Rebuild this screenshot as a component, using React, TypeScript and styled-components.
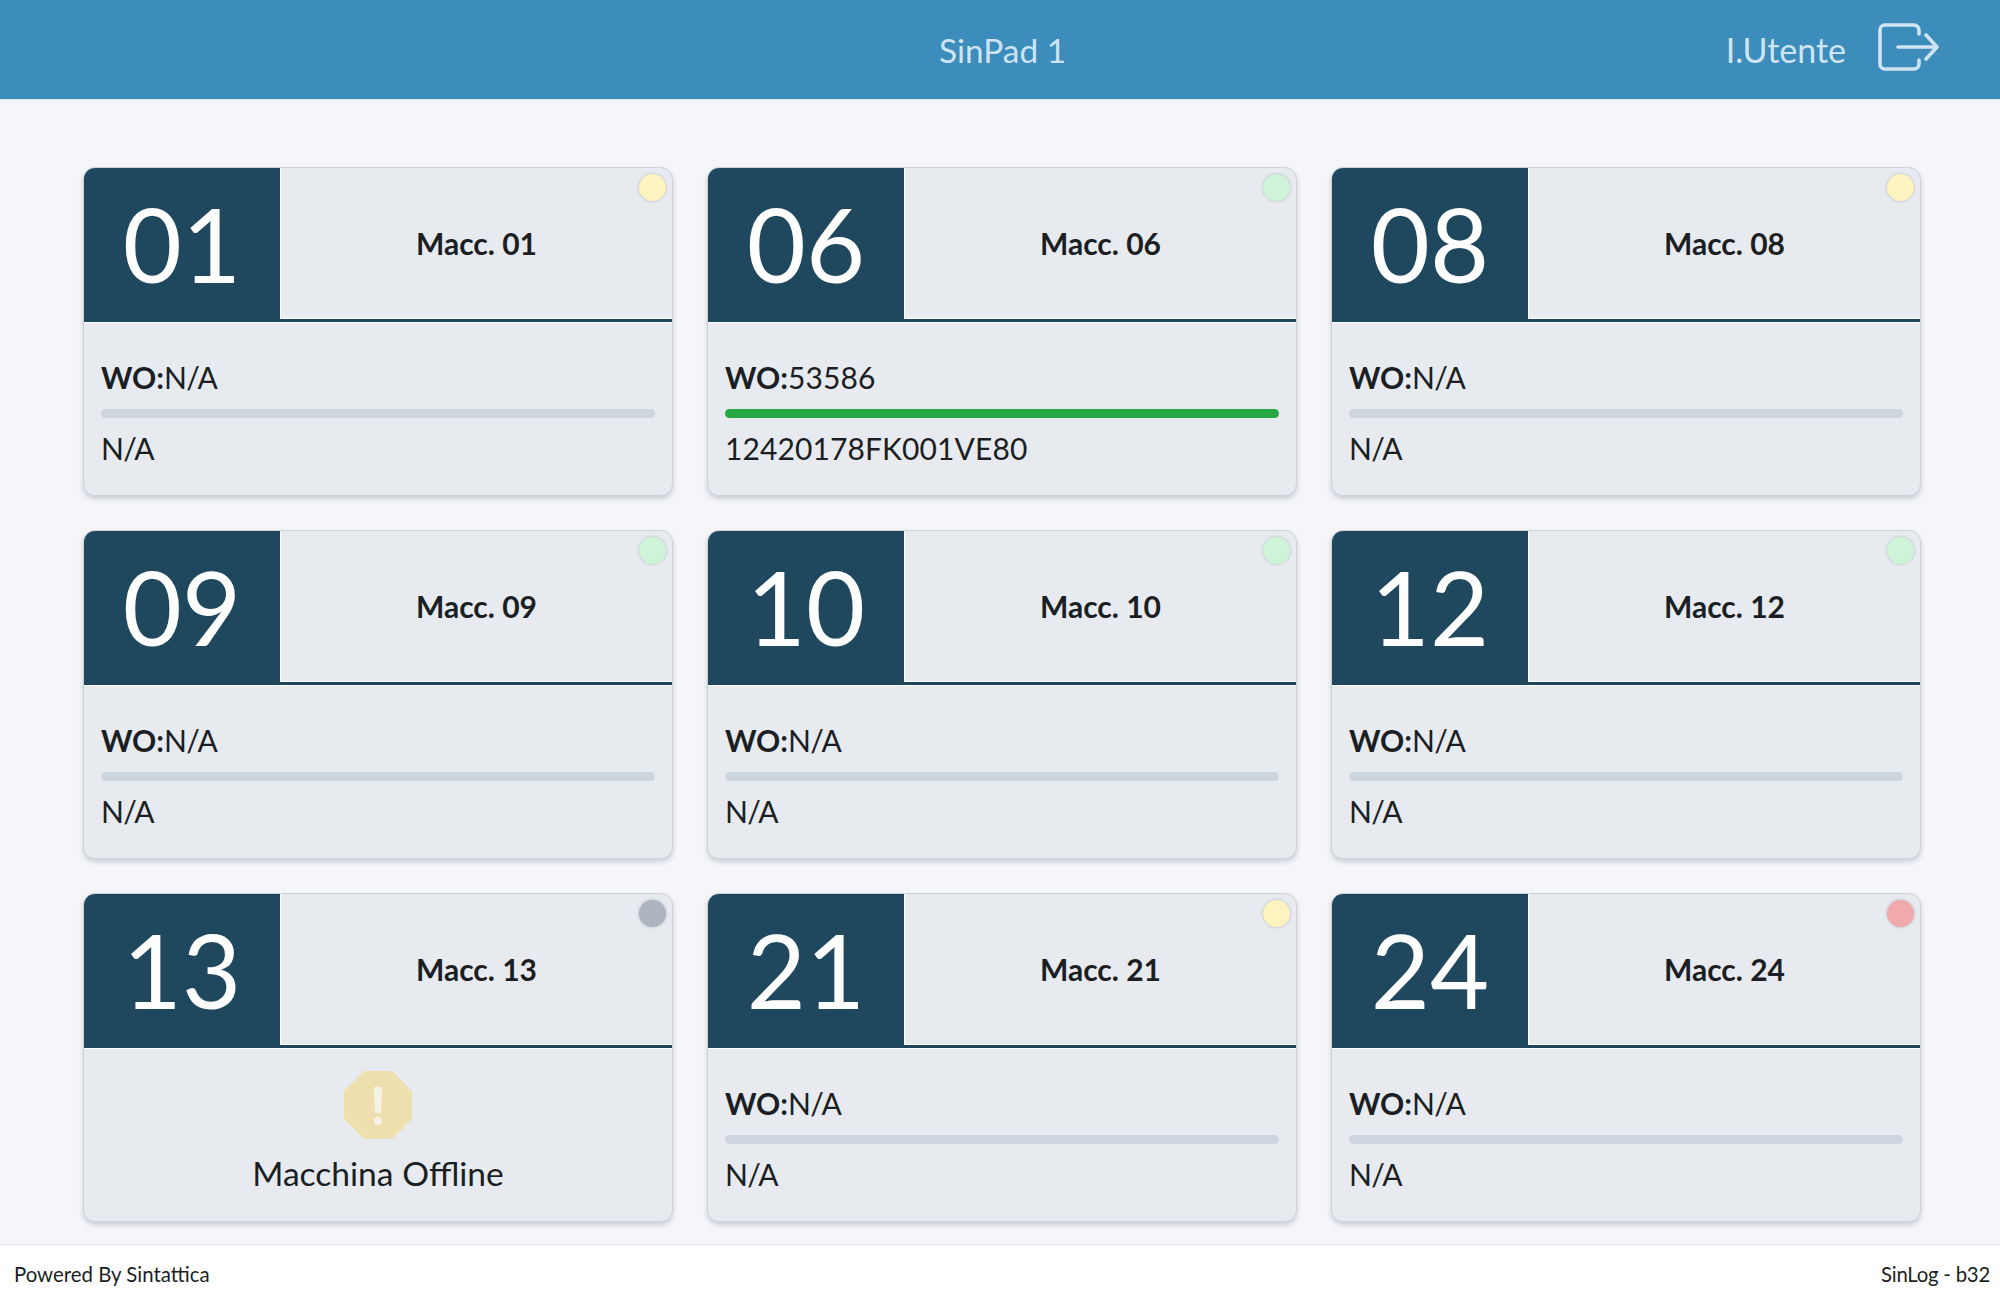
import React from "react";
import styled, { createGlobalStyle } from "styled-components";

const GlobalStyle = createGlobalStyle`
  html, body {
    margin: 0;
    padding: 0;
    background: #f4f6fa;
    font-family: "Lato", "Noto Sans", sans-serif;
    color: #1b1f23;
  }
  * {
    box-sizing: border-box;
  }
`;

const Page = styled.div`
  width: 2000px;
  height: 1300px;
  display: flex;
  flex-direction: column;
`;
const Header = styled.header`
  height: 100px;
  flex: none;
  background: #3c8cbc;
  border-bottom: 1px solid #dbe6ef;
  display: grid;
  grid-template-columns: minmax(0, 1fr) auto minmax(0, 1fr);
  align-items: center;
  color: #cfe4f2;
  font-size: 34px;
`;
const HeaderTitle = styled.div`
  grid-column: 2;
  padding-left: 5px;
  font-size: 33.4px;
`;
const UserArea = styled.div`
  grid-column: 3;
  display: flex;
  justify-content: flex-end;
  align-items: center;
  gap: 32px;
  padding-right: 60px;
`;
const LogoutSvg = styled.svg`
  margin-top: -5px;
`;
const Main = styled.main`
  flex: 1;
  padding: 67px 0 0 83px;
  display: grid;
  grid-template-columns: repeat(3, 590px);
  grid-auto-rows: 329px;
  column-gap: 34px;
  row-gap: 34px;
`;
const Card = styled.div`
  background: #e7eaef;
  border: 1px solid #cfd3d8;
  border-radius: 12px;
  box-shadow: 0 3px 5px rgba(60, 70, 85, 0.22);
  position: relative;
  overflow: hidden;
  display: flex;
  flex-direction: column;
`;
const CardTop = styled.div`
  height: 154px;
  flex: none;
  display: flex;
  border-bottom: 3px solid #1d465c;
  box-shadow: 0 1px 0 #fff;
`;
const NumberBox = styled.div`
  width: 197px;
  flex: none;
  background: #1f485e;
  color: #fff;
  font-size: 102px;
  font-weight: 400;
  display: flex;
  align-items: center;
  justify-content: center;
  border-right: 1px solid #fff;
`;
const MachineName = styled.div`
  flex: 1;
  display: flex;
  align-items: center;
  justify-content: center;
  padding-bottom: 1px;
  font-size: 30px;
  font-weight: 700;
  border-bottom: 1px solid #fff;
`;
const StatusDot = styled.span<{ $color: string }>`
  position: absolute;
  top: 6px;
  right: 6px;
  width: 27px;
  height: 27px;
  border-radius: 50%;
  background: ${(props) => props.$color};
  box-shadow: 0 0 3px rgba(60, 70, 85, 0.3);
`;
const CardBody = styled.div`
  flex: 1;
  padding: 37px 17px 0;
  font-size: 30px;
  line-height: 36px;
`;
const Wo = styled.div`
  margin-bottom: 14px;
`;
const Value = styled.span<{ $missing: boolean }>`
  letter-spacing: ${(props) => (props.$missing ? "-0.7px" : "0.1px")};
`;
const Bar = styled.div`
  height: 9px;
  border-radius: 5px;
  background: #cdd5de;
  margin-bottom: 12px;
  overflow: hidden;
`;
const BarFill = styled.div`
  height: 100%;
  background: #28a745;
`;
const Offline = styled.div`
  flex: 1;
  display: flex;
  flex-direction: column;
  align-items: center;
  padding-top: 23px;
  font-size: 33.6px;
  gap: 14px;
`;
const Footer = styled.footer`
  height: 56px;
  flex: none;
  background: #fff;
  border-top: 1px solid #e8eaef;
  display: flex;
  align-items: center;
  justify-content: space-between;
  padding: 2px 10px 0 14px;
  font-size: 20.4px;
`;
const Build = styled.span`
  letter-spacing: -0.25px;
`;

const machines = [
  { id: "01", dot: "#fdf3be", wo: "N/A", code: "N/A" },
  { id: "06", dot: "#cff3d8", wo: "53586", code: "12420178FK001VE80", progress: 100 },
  { id: "08", dot: "#fdf3be", wo: "N/A", code: "N/A" },
  { id: "09", dot: "#cff3d8", wo: "N/A", code: "N/A" },
  { id: "10", dot: "#cff3d8", wo: "N/A", code: "N/A" },
  { id: "12", dot: "#cff3d8", wo: "N/A", code: "N/A" },
  { id: "13", dot: "#abb4bf", wo: "N/A", code: "N/A", offline: true },
  { id: "21", dot: "#fdf3be", wo: "N/A", code: "N/A" },
  { id: "24", dot: "#f2a9ab", wo: "N/A", code: "N/A" },
];

const LogoutIcon = () => (
  <LogoutSvg width="62" height="48" viewBox="0 0 62 48" fill="none" stroke="#cfe4f2" strokeWidth="3.6" strokeLinecap="round" strokeLinejoin="round">
    <path d="M41 11V7a5 5 0 0 0-5-5H7a5 5 0 0 0-5 5v34a5 5 0 0 0 5 5h29a5 5 0 0 0 5-5v-4" />
    <path d="M20 24h39M48 12l11 12-11 12" />
  </LogoutSvg>
);

const OfflineIcon = () => (
  <svg width="68" height="68" viewBox="0 0 68 68">
    <path d="M20 0h28l20 20v28L48 68H20L0 48V20z" fill="#eedfae" />
    <path d="M31 17h6l-1 24h-4z" fill="#f7f3e4" stroke="#f7f3e4" strokeLinejoin="round" strokeWidth="2" />
    <circle cx="34" cy="50" r="4" fill="#f7f3e4" />
  </svg>
);

const App = () => {
  return (
    <Page>
      <GlobalStyle />
      <Header>
        <HeaderTitle>SinPad 1</HeaderTitle>
        <UserArea>
          <span>I.Utente</span>
          <LogoutIcon />
        </UserArea>
      </Header>
      <Main>
        {machines.map((machine) => (
          <Card key={machine.id}>
            <CardTop>
              <NumberBox>{machine.id}</NumberBox>
              <MachineName>Macc. {machine.id}</MachineName>
            </CardTop>
            <StatusDot $color={machine.dot} />
            {machine.offline ? (
              <Offline>
                <OfflineIcon />
                Macchina Offline
              </Offline>
            ) : (
              <CardBody>
                <Wo>
                  <b>WO:</b>
                  <Value $missing={machine.wo === "N/A"}>{machine.wo}</Value>
                </Wo>
                <Bar>
                  {machine.progress ? (
                    <BarFill style={{ width: `${machine.progress}%` }} />
                  ) : null}
                </Bar>
                <Value $missing={machine.code === "N/A"}>{machine.code}</Value>
              </CardBody>
            )}
          </Card>
        ))}
      </Main>
      <Footer>
        <span>Powered By Sintattica</span>
        <Build>SinLog - b32</Build>
      </Footer>
    </Page>
  );
};

export default App;
